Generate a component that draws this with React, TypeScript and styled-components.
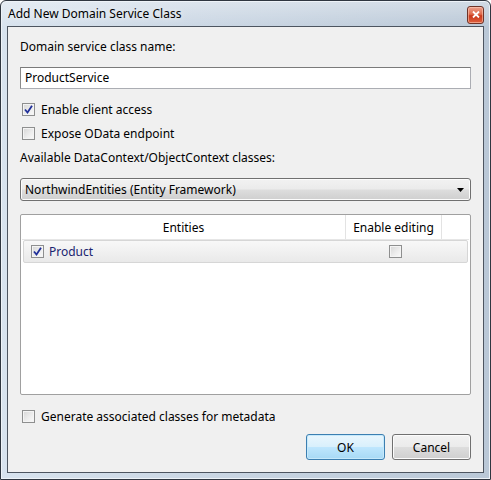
import React from "react";
import styled, { createGlobalStyle } from "styled-components";

const Global = createGlobalStyle`
  html, body {
    margin: 0;
    padding: 0;
    background: #ffffff;
  }
  body {
    font-family: "Segoe UI", "Noto Sans", "Open Sans", sans-serif;
    font-size: 12px;
    color: #000;
  }
`;

const Frame = styled.div`
  width: 491px;
  height: 480px;
  box-sizing: border-box;
  border: 1px solid #2f3640;
  border-radius: 6px 6px 0 0;
  background:
    linear-gradient(180deg, rgba(255, 255, 255, 0.35) 0%, rgba(255, 255, 255, 0) 26px),
    linear-gradient(90deg, #d8e3ee 0%, #cbd7e4 40%, #bac8d7 100%);
  display: flex;
  flex-direction: column;
  padding: 0 6px 6px 6px;
  box-shadow: inset 0 0 0 1px #eef3f8;
`;

const TitleBar = styled.div`
  height: 26px;
  display: flex;
  align-items: center;
  justify-content: space-between;
  padding-left: 1px;
`;

const Title = styled.span`
  font-size: 12px;
  color: #000;
  text-shadow: 0 0 6px rgba(255, 255, 255, 0.9);
`;

const CloseButton = styled.div`
  width: 17px;
  height: 18px;
  margin-top: 2px;
  box-sizing: border-box;
  border: 1px solid #6e3328;
  border-radius: 3px;
  background: linear-gradient(180deg, #eba08c 0%, #e06a4c 45%, #c8381b 55%, #e0603e 100%);
  display: grid;
  place-items: center;
  box-shadow: inset 0 0 0 1px rgba(255, 210, 190, 0.55);
`;

const Client = styled.div`
  flex: 1;
  border: 1px solid #4d5560;
  background: #f0f0f0;
  padding: 12px;
  display: flex;
  flex-direction: column;
`;

const Label = styled.div<{ $mt?: number }>`
  height: 16px;
  line-height: 16px;
  margin-top: ${(p) => p.$mt ?? 0}px;
`;

const TextInput = styled.div`
  height: 22px;
  margin-top: 12px;
  box-sizing: border-box;
  border: 1px solid #abadb3;
  border-top-color: #7a7a7a;
  border-left-color: #8a8a8a;
  background: #fff;
  padding-left: 4px;
  line-height: 20px;
`;

const CheckRow = styled.label<{ $mt: number }>`
  display: flex;
  align-items: center;
  gap: 6px;
  height: 16px;
  margin-top: ${(p) => p.$mt}px;
  padding-left: 2px;
`;

const Box = styled.span`
  width: 13px;
  height: 13px;
  box-sizing: border-box;
  border: 1px solid #8e8f8f;
  background: linear-gradient(135deg, #d6d6d6 0%, #eeeeee 60%, #fafafa 100%);
  box-shadow: inset 0 0 0 1px #f4f4f4;
  display: grid;
  place-items: center;
  flex: none;
`;

const Combo = styled.div`
  height: 23px;
  margin-top: 12px;
  box-sizing: border-box;
  border: 1px solid #707070;
  border-radius: 3px;
  background: linear-gradient(180deg, #f2f2f2 0%, #ebebeb 48%, #dddddd 52%, #cfcfcf 100%);
  box-shadow: inset 0 0 0 1px #fcfcfc;
  display: flex;
  align-items: center;
  justify-content: space-between;
  padding: 0 6px 0 4px;
`;

const Grid = styled.div`
  height: 181px;
  margin-top: 13px;
  box-sizing: border-box;
  border: 1px solid #a0a0a0;
  border-radius: 2px;
  background: #fff;
  display: flex;
  flex-direction: column;
  padding: 0 1px;
`;

const HeaderRow = styled.div`
  display: grid;
  grid-template-columns: 324px 96px 1fr;
  height: 24px;
  border-bottom: 1px solid #e6e6e6;
`;

const HeaderCell = styled.div<{ $last?: boolean }>`
  display: flex;
  align-items: center;
  justify-content: center;
  border-right: ${(p) => (p.$last ? "none" : "1px solid #e3e3e3")};
`;

const DataRow = styled.div`
  display: grid;
  grid-template-columns: 323px 96px 1fr;
  height: 23px;
  margin: 0 1px;
  box-sizing: border-box;
  border: 1px solid #d6d6d6;
  border-radius: 2px;
  background: linear-gradient(180deg, #f8f8f8 0%, #e9e9e9 100%);
`;

const NameCell = styled.div`
  display: flex;
  align-items: center;
  gap: 5px;
  padding-left: 7px;
  color: #1a2470;
`;

const CenterCell = styled.div`
  display: flex;
  align-items: center;
  justify-content: center;
`;

const ButtonRow = styled.div`
  display: flex;
  justify-content: flex-end;
  gap: 7px;
  margin-top: 10px;
`;

const Button = styled.div<{ $default?: boolean }>`
  width: 79px;
  height: 26px;
  box-sizing: border-box;
  border: 1px solid ${(p) => (p.$default ? "#3c7fb1" : "#707070")};
  border-radius: 3px;
  background: ${(p) =>
    p.$default
      ? "linear-gradient(180deg, #eaf6fd 0%, #d9f0fc 48%, #bee6fd 52%, #a7d9f5 100%)"
      : "linear-gradient(180deg, #f2f2f2 0%, #ebebeb 48%, #dddddd 52%, #cfcfcf 100%)"};
  box-shadow: inset 0 0 0 1px ${(p) => (p.$default ? "#c6e9fb" : "#fcfcfc")};
  display: grid;
  place-items: center;
`;

const Spacer = styled.div`
  flex: 1;
`;

function Check({ checked }: { checked?: boolean }) {
  return (
    <Box>
      {checked && (
        <svg width="9" height="9" viewBox="0 0 9 9">
          <path d="M1 4.5 L3.5 7.5 L8 0.8" fill="none" stroke="#21309a" strokeWidth="1.8" />
        </svg>
      )}
    </Box>
  );
}

export default function App() {
  return (
    <>
      <Global />
      <Frame>
        <TitleBar>
          <Title>Add New Domain Service Class</Title>
          <CloseButton>
            <svg width="8" height="7" viewBox="0 0 8 7">
              <path d="M1 0.5 L7 6.5 M7 0.5 L1 6.5" stroke="#fff" strokeWidth="1.8" />
            </svg>
          </CloseButton>
        </TitleBar>
        <Client>
          <Label>Domain service class name:</Label>
          <TextInput>ProductService</TextInput>
          <CheckRow $mt={12}>
            <Check checked />
            Enable client access
          </CheckRow>
          <CheckRow $mt={8}>
            <Check />
            Expose OData endpoint
          </CheckRow>
          <Label $mt={9}>Available DataContext/ObjectContext classes:</Label>
          <Combo>
            <span>NorthwindEntities (Entity Framework)</span>
            <svg width="7" height="4" viewBox="0 0 7 4">
              <path d="M0 0 H7 L3.5 4 Z" fill="#000" />
            </svg>
          </Combo>
          <Grid>
            <HeaderRow>
              <HeaderCell>Entities</HeaderCell>
              <HeaderCell>Enable editing</HeaderCell>
              <HeaderCell $last />
            </HeaderRow>
            <DataRow>
              <NameCell>
                <Check checked />
                Product
              </NameCell>
              <CenterCell>
                <Check />
              </CenterCell>
              <div />
            </DataRow>
            <Spacer />
          </Grid>
          <CheckRow $mt={13}>
            <Check />
            Generate associated classes for metadata
          </CheckRow>
          <ButtonRow>
            <Button $default>OK</Button>
            <Button>Cancel</Button>
          </ButtonRow>
        </Client>
      </Frame>
    </>
  );
}
